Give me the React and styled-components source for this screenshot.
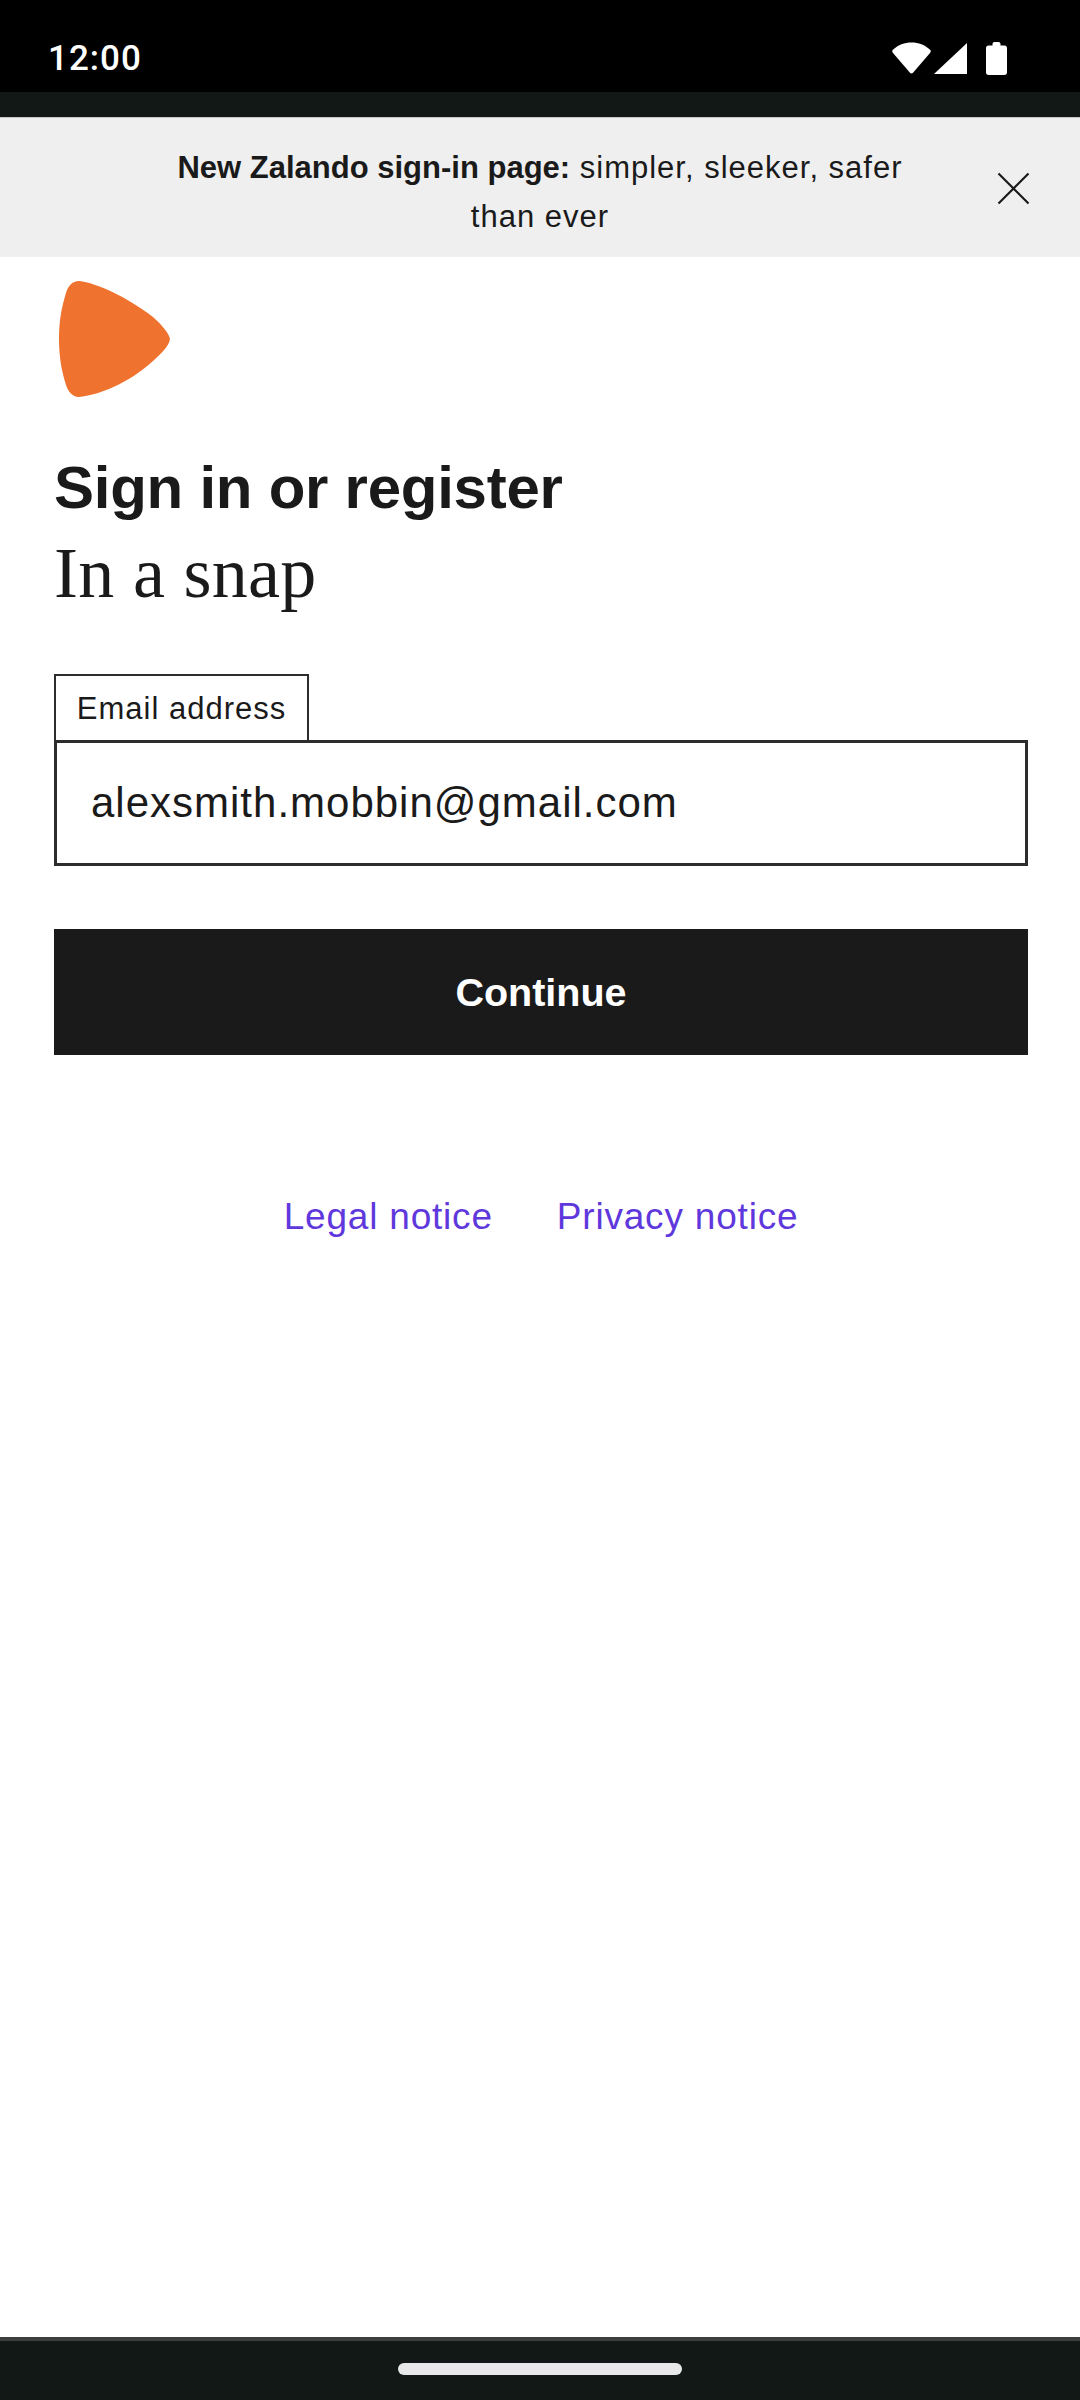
import styled, { createGlobalStyle } from "styled-components";

const COLORS = {
	ink: "#1a1a1a",
	line: "#2c2c2c",
	bar: "#121816",
	banner: "#efefef",
	orange: "#ef732e",
	link: "#5f38dd",
};

const GlobalStyle = createGlobalStyle`
	html, body {
		margin: 0;
		padding: 0;
		background: #fff;
	}
	* { box-sizing: border-box; }
`;

const App = () => {
	return (
		<>
			<GlobalStyle />
			<Screen>
				<StatusBar>
					<Clock>12:00</Clock>
					<StatusIcons>
						<svg width="39" height="32" viewBox="0 0 39 32">
							<path d="M1 11C-0.200 9.800 0 8.500 1.200 7.500C6 3 12.500 0.500 19.500 0.500S33 3 37.800 7.500C39 8.500 39.200 9.800 38 11L21 30.800C20.200 31.800 18.800 31.800 18 30.800Z" fill="#fff" />
						</svg>
						<svg width="33" height="31" viewBox="0 0 33 31">
							<path d="M33 0V31H0Z" fill="#fff" />
						</svg>
						<BatteryIcon width="21" height="33" viewBox="0 0 21 33">
							<path d="M6.500 2C6.500 0.800 7.300 0 8.500 0h4c1.200 0 2 0.800 2 2V3.500h4c1.400 0 2.500 1.100 2.500 2.500V30.500c0 1.400-1.100 2.500-2.500 2.500H2.500C1.100 33 0 31.900 0 30.500V6c0-1.400 1.100-2.500 2.500-2.500h4Z" fill="#fff" />
						</BatteryIcon>
					</StatusIcons>
				</StatusBar>
				<AppBand />
				<Banner>
					<BannerText>
						<strong>New Zalando sign-in page:</strong> simpler, sleeker, safer than ever
					</BannerText>
					<CloseButton aria-label="Close">
						<svg width="33" height="33" viewBox="0 0 33 33">
							<path d="M1.500 1.500L31.500 31.500M31.500 1.500L1.500 31.500" stroke={COLORS.ink} strokeWidth="2.200" fill="none" />
						</svg>
					</CloseButton>
				</Banner>
				<Main>
					<Logo width="111" height="116" viewBox="0 0 111 116">
						<path d="M20 0C38 2 68 16 94 36C102 43 110 52 111 58C110 65 102 73 94 80C70 102 40 114 20 116C13 116 9 110 7 104C2 88 0 74 0 58C0 42 2 28 7 12C9 5 13 0 20 0Z" fill={COLORS.orange} />
					</Logo>
					<Title>Sign in or register</Title>
					<Subtitle>In a snap</Subtitle>
					<Field>
						<FieldLabel htmlFor="email">Email address</FieldLabel>
						<EmailInput id="email" type="email" defaultValue="alexsmith.mobbin@gmail.com" />
					</Field>
					<ContinueButton>Continue</ContinueButton>
					<FooterLinks>
						<FooterLink href="#">Legal notice</FooterLink>
						<FooterLink href="#">Privacy notice</FooterLink>
					</FooterLinks>
				</Main>
				<NavBar>
					<HomeHandle />
				</NavBar>
			</Screen>
		</>
	);
};

const Screen = styled.div`
	width: 1080px;
	height: 2400px;
	display: flex;
	flex-direction: column;
	background: #fff;
	overflow: hidden;
	font-family: "Liberation Sans", Arial, sans-serif;
	color: ${COLORS.ink};
`;

const StatusBar = styled.div`
	height: 92px;
	flex-shrink: 0;
	background: #000;
	display: flex;
	align-items: center;
	justify-content: space-between;
	padding: 24px 73px 0 48px;
`;

const Clock = styled.span`
	font-family: Roboto, sans-serif;
	font-weight: 500;
	font-size: 35px;
	letter-spacing: 1px;
	color: #fff;
`;

const StatusIcons = styled.div`
	display: flex;
	align-items: center;
	gap: 3px;
`;

const BatteryIcon = styled.svg`
	margin-left: 16px;
`;

const AppBand = styled.div`
	height: 25px;
	flex-shrink: 0;
	background: ${COLORS.bar};
`;

const Banner = styled.div`
	height: 140px;
	flex-shrink: 0;
	padding-top: 9px;
	background: ${COLORS.banner};
	border-top: 1px solid #c4c4c4;
	display: flex;
	align-items: center;
	justify-content: center;
	position: relative;
`;

const BannerText = styled.p`
	margin: 0;
	width: 780px;
	font-size: 31px;
	line-height: 49px;
	text-align: center;
	letter-spacing: 1px;
	strong { font-weight: 700; letter-spacing: 0; }
`;

const CloseButton = styled.button`
	position: absolute;
	right: 50px;
	top: 54px;
	padding: 0;
	border: 0;
	background: none;
	display: flex;
`;

const Main = styled.main`
	flex: 1;
	display: flex;
	flex-direction: column;
	padding: 24px 52px 0 54px;
`;

const Logo = styled.svg`
	display: block;
	margin-left: 5px;
	flex-shrink: 0;
`;

const Title = styled.h1`
	margin: 56px 0 0;
	font-size: 60px;
	line-height: 70px;
	font-weight: 700;
	letter-spacing: -0.25px;
`;

const Subtitle = styled.div`
	margin-top: 14px;
	font-family: "Liberation Serif", "Times New Roman", serif;
	font-size: 72px;
	line-height: 72px;
	letter-spacing: 0.3px;
`;

const Field = styled.div`
	margin-top: 65px;
	display: flex;
	flex-direction: column;
	align-items: flex-start;
`;

const FieldLabel = styled.label`
	height: 68px;
	width: 255px;
	margin-bottom: -2px;
	border: 2px solid ${COLORS.line};
	border-bottom: 0;
	display: flex;
	align-items: center;
	justify-content: center;
	font-size: 31px;
	letter-spacing: 1px;
`;

const EmailInput = styled.input`
	width: 100%;
	height: 126px;
	padding: 0 34px;
	border: 3px solid ${COLORS.line};
	border-radius: 0;
	outline: none;
	background: #fff;
	font-family: "Liberation Sans", Arial, sans-serif;
	font-size: 42px;
	letter-spacing: 1px;
	color: ${COLORS.ink};
`;

const ContinueButton = styled.button`
	margin-top: 63px;
	width: 100%;
	height: 126px;
	border: 0;
	background: ${COLORS.ink};
	color: #fff;
	font-family: "Liberation Sans", Arial, sans-serif;
	font-weight: 700;
	font-size: 39.5px;
`;

const FooterLinks = styled.nav`
	margin-top: 138px;
	display: flex;
	justify-content: center;
	gap: 64px;
`;

const FooterLink = styled.a`
	font-size: 37px;
	line-height: 48px;
	letter-spacing: 0.8px;
	color: ${COLORS.link};
	text-decoration: none;
`;

const NavBar = styled.div`
	height: 63px;
	flex-shrink: 0;
	background: ${COLORS.bar};
	border-top: 4px solid #3c3f3e;
	display: flex;
	justify-content: center;
	padding-top: 22px;
`;

const HomeHandle = styled.div`
	width: 284px;
	height: 12px;
	border-radius: 6px;
	background: #e8e8ea;
`;

export default App;
